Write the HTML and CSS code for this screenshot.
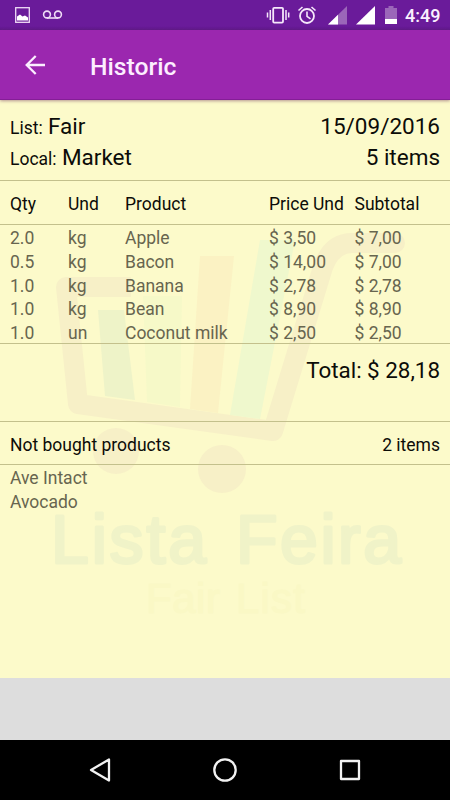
FILE: index.html
```html
<!DOCTYPE html>
<html lang="en">
<head>
<meta charset="utf-8">
<title>Historic</title>
<link rel="stylesheet" href="styles.css">
</head>
<body>
<div class="screen">
  <header class="status">
    <svg class="status-left" width="64" height="30" viewBox="0 0 64 30" fill="none" stroke="#efdcf6">
      <rect x="15.7" y="7.7" width="13.6" height="14.6" stroke-width="1.3"/>
      <path d="M17 20.5v-4l3-2 2.5 2 2.5-1 3 2v3z" fill="#fff" stroke="none"/>
      <circle cx="47" cy="14.500" r="3.400" stroke-width="1.600"/>
      <circle cx="58" cy="14.500" r="3.400" stroke-width="1.600"/>
      <path d="M47 18h11" stroke-width="1.600"/>
    </svg>
    <svg class="status-right" width="136" height="30" viewBox="265 0 136 30" fill="none" stroke="#f5e8fa">
      <rect x="273.200" y="7.800" width="9.800" height="14.800" rx="1" stroke-width="1.800"/>
      <path d="M270.300 10v10M286 10v10M267.500 12.500v5M288.700 12.500v5" stroke-width="1.500"/>
      <circle cx="307" cy="16" r="7" stroke-width="1.800"/>
      <path d="M307 11.500v4.800l3.500 2.500M298.500 10.500l4-3.500M315.500 10.500l-4-3.500" stroke-width="1.600"/>
      <path d="M347 6v18.500h-19z" fill="#9b66b9" stroke="none"/>
      <path d="M338 14.800v9.700h-10z" fill="#fff" stroke="none"/>
      <path d="M375 6v18.500h-19z" fill="#fff" stroke="none"/>
      <path d="M385 8h3.500V6h5v2h3.500v11h-12z" fill="#9b66b9" stroke="none"/>
      <path d="M385 19h12v5h-12z" fill="#fff" stroke="none"/>
    </svg>
    <span class="clock">4:49</span>
  </header>
  <nav class="toolbar">
    <svg width="20" height="20" viewBox="0 0 20 20" fill="none" stroke="#fbeeff" stroke-width="2.300"><path d="M20 10H2M10.700 1L1.700 10l9 9"/></svg>
    <h1>Historic</h1>
  </nav>
  <main class="paper">
    <svg class="watermark" width="450" height="578" viewBox="0 100 450 578">
      <g fill="none" stroke="#f7f0c7" stroke-width="20" stroke-linejoin="round">
        <path d="M131 287H66L78 404L273 431L323 267Q332 243 352 243H394" />
        <path d="M394 243h1" stroke-linecap="round"/>
      </g>
      <g fill="#f7f0c7"><circle cx="116" cy="451" r="23"/><circle cx="222" cy="469" r="24"/></g>
      <path d="M98 310h26l11 90-30-4z" fill="#eef3c8"/>
      <path d="M143 296h39l-2 111-33-5z" fill="#f6f9c8"/>
      <path d="M200 256h34l-16 157-28-4z" fill="#fbf2c3"/>
      <path d="M260 240h35l-35 179-30-4z" fill="#eff8cd"/>
      <g class="mark-large">
        <text x="51" y="563" textLength="155" lengthAdjust="spacing">Lista</text>
        <text x="236" y="563" textLength="165" lengthAdjust="spacing">Feira</text>
      </g>
      <g class="mark-small">
        <text x="146" y="613" textLength="74" lengthAdjust="spacing">Fair</text>
        <text x="236" y="613" textLength="69" lengthAdjust="spacing">List</text>
      </g>
    </svg>
    <section class="summary">
      <div class="line"><span>List: <b>Fair</b></span><b>15/09/2016</b></div>
      <div class="line"><span>Local: <b>Market</b></span><b>5 items</b></div>
    </section>
    <div class="cols heading"><span>Qty</span><span>Und</span><span>Product</span><span>Price Und</span><span>Subtotal</span></div>
    <section class="rows">
      <div class="cols"><span>2.0</span><span>kg</span><span>Apple</span><span>$ 3,50</span><span>$ 7,00</span></div>
      <div class="cols"><span>0.5</span><span>kg</span><span>Bacon</span><span>$ 14,00</span><span>$ 7,00</span></div>
      <div class="cols"><span>1.0</span><span>kg</span><span>Banana</span><span>$ 2,78</span><span>$ 2,78</span></div>
      <div class="cols"><span>1.0</span><span>kg</span><span>Bean</span><span>$ 8,90</span><span>$ 8,90</span></div>
      <div class="cols"><span>1.0</span><span>un</span><span>Coconut milk</span><span>$ 2,50</span><span>$ 2,50</span></div>
    </section>
    <div class="total">Total: $ 28,18</div>
    <div class="missing"><span>Not bought products</span><span>2 items</span></div>
    <section class="names"><div>Ave Intact</div><div>Avocado</div></section>
  </main>
  <div class="ad"></div>
  <footer class="navbar">
    <svg width="450" height="60" viewBox="0 0 450 60" fill="none" stroke="#f2f2f2" stroke-width="2.300" stroke-linejoin="round">
      <path d="M109 19.500v21L91 30z"/><circle cx="225" cy="30" r="10.700"/><rect x="341" y="21" width="18" height="18"/>
    </svg>
  </footer>
</div>
</body>
</html>
```
FILE: styles.css
```css
* { box-sizing: border-box; }
body { margin: 0; font-family: Roboto, sans-serif; font-size: 17.5px; color: #0c0c08; }
svg { display: block; }
.screen { width: 450px; height: 800px; display: flex; flex-direction: column; overflow: hidden; }
.status { height: 30px; flex: none; display: flex; background: linear-gradient(#6a1b9a 26px, #5f188b); color: #faf0ff; }
.status-right { margin-left: auto; }
.clock { width: 49px; padding-left: 4px; font-size: 18px; font-weight: 500; line-height: 32px; }
.toolbar { height: 70px; flex: none; display: flex; align-items: center; gap: 45px; padding-left: 25px; background: #9b27af; border-bottom: 1px solid #841e96; box-shadow: 0 1px 3px rgba(110, 50, 90, .5); position: relative; z-index: 2; }
.toolbar h1 { margin: 4px 0 0; font-size: 24.7px; font-weight: 500; line-height: 30px; color: #fdeeff; }
.paper { height: 578px; flex: none; position: relative; z-index: 0; background: #fcfaca; }
.watermark { position: absolute; top: 0; left: 0; z-index: -1; }
.mark-large, .mark-small { font-family: "Liberation Sans", sans-serif; stroke-linejoin: round; }
.mark-large { font-size: 68px; fill: #f0f3c8; stroke: #f0f3c8; stroke-width: 3px; }
.mark-small { font-size: 42px; fill: #faf8c5; stroke: #faf8c5; stroke-width: 1px; }
.summary { height: 81px; padding: 11px 10px 0; border-bottom: 1px solid #c3c08c; }
.line { height: 30.5px; display: flex; justify-content: space-between; line-height: 30px; }
.line b { font-size: 22.5px; font-weight: 400; }
.line span b { margin-left: 1px; }
.cols { display: grid; grid-template-columns: 58px 57px 144px 85.5px 1fr; padding: 0 0 0 10px; white-space: nowrap; }
.heading { height: 44px; line-height: 46px; border-bottom: 1px solid #c3c08c; }
.rows { height: 119px; padding-top: 1px; border-bottom: 1px solid #c3c08c; color: #67654f; }
.rows .cols { height: 23.8px; line-height: 24px; }
.total { height: 78px; padding: 11px 10px 0; text-align: right; font-size: 22.4px; line-height: 30px; border-bottom: 1px solid #c3c08c; }
.missing { height: 43px; padding: 0 10px; display: flex; justify-content: space-between; line-height: 47px; border-bottom: 1px solid #c3c08c; }
.names { padding: 2px 10px; color: #67654f; line-height: 23.8px; }
.ad { height: 62px; flex: none; background: #ddd; }
.navbar { height: 60px; flex: none; background: #000; }
```
